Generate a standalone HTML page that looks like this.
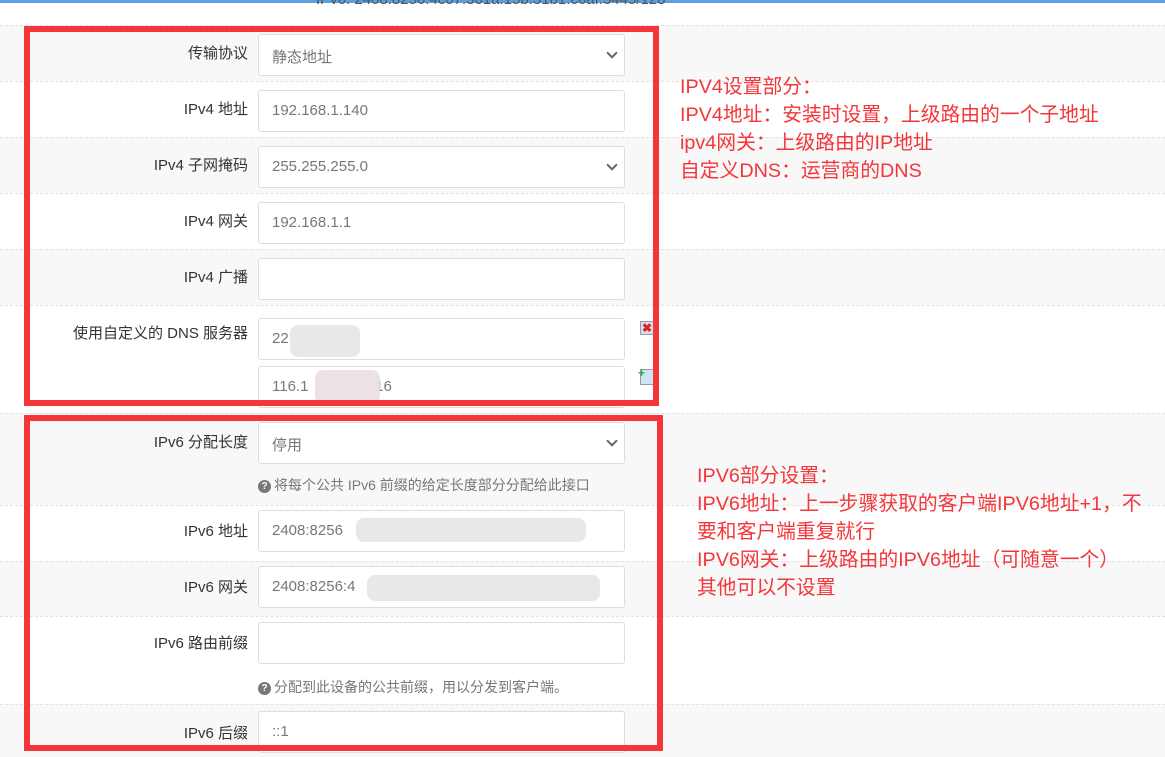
<!DOCTYPE html>
<html><head><meta charset="utf-8"><style>
*{box-sizing:border-box;margin:0;padding:0}
body{width:1165px;height:757px;overflow:hidden;background:#fff;font-family:"Liberation Sans","Noto Sans CJK SC",sans-serif;position:relative;color:#333}
.top{position:absolute;left:0;top:0;width:1165px;height:3px;background:#5aa0e0}
.toptext{position:absolute;left:316px;top:-9px;font-size:15px;color:#555}
.row{position:absolute;left:0;width:1165px;border-top:1px dashed #e2e2e2}
.g{background:#f8f8f8}
.lbl{position:absolute;right:917px;font-size:15px;color:#333;text-align:right;white-space:nowrap}
.inp{position:absolute;left:258px;width:367px;height:42px;background:#fff;border:1px solid #ddd;border-radius:3px;font-size:15px;color:#777;padding:11px 13px}
.sel::after{content:"";position:absolute;right:8px;top:14px;width:6px;height:6px;border-right:2px solid #666;border-bottom:2px solid #666;transform:rotate(45deg)}
.help{position:absolute;left:258px;font-size:14px;color:#777}
.help b{display:inline-block;width:13px;height:13px;border-radius:50%;background:#777;color:#fff;font-size:10px;text-align:center;line-height:13px;margin-right:3px;vertical-align:1px}
.box{position:absolute;border:6px solid #f4363b}
.ann{position:absolute;color:#f4363b;font-size:19.8px;line-height:28px;white-space:nowrap;font-family:"Liberation Sans","Noto Sans CJK SC",sans-serif}
.blur{position:absolute;background:#e6e6e8;border-radius:8px;opacity:.9}
</style></head><body>
<div class="top"></div>
<div class="toptext">IPv6: 2408:8256:4c07:301a:15b:31b1:c6af:3445/128</div>
<div class="row g" style="top:25px;height:56px"></div>
<div class="row" style="top:81px;height:56px"></div>
<div class="row g" style="top:137px;height:56px"></div>
<div class="row" style="top:193px;height:56px"></div>
<div class="row g" style="top:249px;height:56px"></div>
<div class="row" style="top:305px;height:108px"></div>
<div class="row g" style="top:413px;height:92px"></div>
<div class="row" style="top:505px;height:56px"></div>
<div class="row g" style="top:561px;height:55px"></div>
<div class="row" style="top:616px;height:88px"></div>
<div class="row g" style="top:704px;height:53px"></div>

<div class="lbl" style="top:42px">传输协议</div>
<div class="inp sel" style="top:34px">静态地址</div>
<div class="lbl" style="top:98px">IPv4 地址</div>
<div class="inp" style="top:90px">192.168.1.140</div>
<div class="lbl" style="top:154px">IPv4 子网掩码</div>
<div class="inp sel" style="top:146px">255.255.255.0</div>
<div class="lbl" style="top:210px">IPv4 网关</div>
<div class="inp" style="top:202px">192.168.1.1</div>
<div class="lbl" style="top:266px">IPv4 广播</div>
<div class="inp" style="top:258px"></div>
<div class="lbl" style="top:322px">使用自定义的 DNS 服务器</div>
<div class="inp" style="top:318px">22</div>
<div class="blur" style="left:290px;top:325px;width:70px;height:32px"></div>
<div class="inp" style="top:366px">116.1&nbsp;&nbsp;&nbsp;&nbsp;&nbsp;&nbsp;&nbsp;&nbsp;&nbsp;&nbsp;&nbsp;&nbsp;&nbsp;&nbsp;&nbsp;&nbsp;16</div>
<div class="blur" style="left:315px;top:370px;width:65px;height:34px;background:#eadfe2"></div>
<div style="position:absolute;left:640px;top:321px;width:14px;height:14px;background:#cfe0f0;border:1px solid #99a;color:#d22;font-size:12px;font-weight:bold;line-height:12px;text-align:center">✖</div>
<div style="position:absolute;left:640px;top:369px;width:14px;height:16px;background:#cfe4f7;border:1px solid #99a"></div>
<div style="position:absolute;left:638px;top:366px;color:#3a3;font-size:12px;font-weight:bold">+</div>

<div class="lbl" style="top:431px">IPv6 分配长度</div>
<div class="inp sel" style="top:422px">停用</div>
<div class="help" style="top:475px"><b>?</b>将每个公共 IPv6 前缀的给定长度部分分配给此接口</div>
<div class="lbl" style="top:520px">IPv6 地址</div>
<div class="inp" style="top:510px">2408:8256</div>
<div class="blur" style="left:356px;top:518px;width:230px;height:24px"></div>
<div class="lbl" style="top:576px">IPv6 网关</div>
<div class="inp" style="top:566px">2408:8256:4</div>
<div class="blur" style="left:367px;top:575px;width:233px;height:26px"></div>
<div class="lbl" style="top:632px">IPv6 路由前缀</div>
<div class="inp" style="top:622px"></div>
<div class="help" style="top:677px"><b>?</b>分配到此设备的公共前缀，用以分发到客户端。</div>
<div class="lbl" style="top:722px">IPv6 后缀</div>
<div class="inp" style="top:711px">::1</div>

<div class="box" style="left:24px;top:26px;width:635px;height:380px"></div>
<div class="box" style="left:24px;top:415px;width:639px;height:336px"></div>

<div class="ann" style="left:680px;top:73px">IPV4设置部分：<br>IPV4地址：安装时设置，上级路由的一个子地址<br>ipv4网关：上级路由的IP地址<br>自定义DNS：运营商的DNS</div>
<div class="ann" style="left:697px;top:462px">IPV6部分设置：<br>IPV6地址：上一步骤获取的客户端IPV6地址+1，不<br>要和客户端重复就行<br>IPV6网关：上级路由的IPV6地址（可随意一个）<br>其他可以不设置</div>
</body></html>
